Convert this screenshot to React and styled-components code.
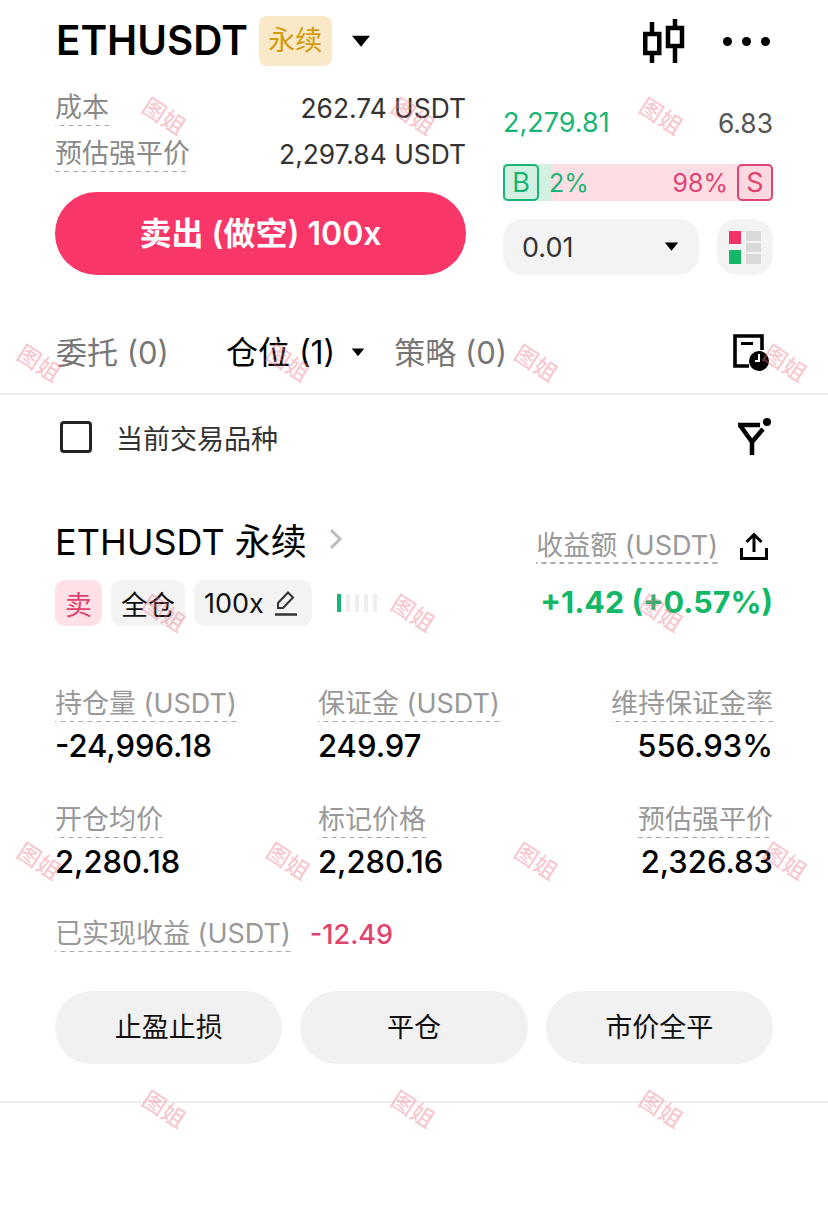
import React from 'react';
import styled, { createGlobalStyle } from 'styled-components';

const GlobalStyle = createGlobalStyle`
    html, body {
        margin: 0;
        background: #fff;
        font-family: Inter, "Noto Sans CJK SC", "Noto Sans", sans-serif;
    }
`;

const WATERMARKS = [
    [165, 115], [414, 115], [662, 115],
    [40, 362], [289, 362], [537, 362], [786, 362],
    [165, 612], [414, 612], [662, 612],
    [40, 860], [289, 860], [537, 860], [786, 860],
    [165, 1108], [414, 1108], [662, 1108],
];

const DETAILS = [
    { label: '持仓量 (USDT)', value: '-24,996.18' },
    { label: '保证金 (USDT)', value: '249.97' },
    { label: '维持保证金率', value: '556.93%', right: true },
    { label: '开仓均价', value: '2,280.18' },
    { label: '标记价格', value: '2,280.16' },
    { label: '预估强平价', value: '2,326.83', right: true },
];

function Caret({ size = 20 }) {
    return (
        <svg width={size} height={size * 0.62} viewBox="0 0 20 12">
            <path d="M1 0.5h18L10 11.5z" fill="#000" />
        </svg>
    );
}

function CandleIcon() {
    return (
        <svg width="42" height="44" viewBox="0 0 42 44" fill="none" stroke="#000" strokeWidth="4.5">
            <path d="M9 3v12M9 34v10M32 0v9M32 27v17" />
            <rect x="2.250" y="15" width="14" height="19" />
            <rect x="25" y="9" width="14" height="18" />
        </svg>
    );
}

function OrdersIcon() {
    return (
        <svg width="37" height="37" viewBox="0 0 37 37">
            <path d="M16 32H2V2h27v14" fill="none" stroke="#000" strokeWidth="3.6" />
            <path d="M8 9.500h12" stroke="#000" strokeWidth="3" />
            <circle cx="26" cy="27" r="10" fill="#000" />
            <path d="M26 20v7h-4" fill="none" stroke="#fff" strokeWidth="2" />
        </svg>
    );
}

function FilterIcon() {
    return (
        <svg width="34" height="38" viewBox="0 0 34 38" fill="none">
            <path d="M0 7h22M2.500 8L14 24V37M14 24L25 11" stroke="#000" strokeWidth="4.500" />
            <circle cx="29" cy="4" r="4" fill="#000" />
        </svg>
    );
}

function ShareIcon() {
    return (
        <svg width="28" height="28" viewBox="0 0 28 28" fill="none" stroke="#000" strokeWidth="3">
            <path d="M14 20V3M6.500 10L14 2.500 21.500 10M1.500 16v10.500h25V16" />
        </svg>
    );
}

function PenIcon() {
    return (
        <svg width="24" height="26" viewBox="0 0 24 26" fill="none" stroke="#333" strokeWidth="2">
            <path d="M4 18V13L14 2.500l5 5L9 18z" />
            <path d="M1 24.500h22" strokeWidth="2.500" />
        </svg>
    );
}

function BookIcon() {
    return (
        <svg width="33" height="33" viewBox="0 0 33 33">
            <rect x="0" y="0" width="12" height="13" fill="#f0346a" />
            <rect x="0" y="19" width="12" height="14" fill="#12b866" />
            <rect x="17" y="0" width="15" height="10" fill="#d9d9d9" />
            <rect x="17" y="12" width="15" height="9" fill="#d9d9d9" />
            <rect x="17" y="23" width="15" height="10" fill="#d9d9d9" />
        </svg>
    );
}

function App() {
    return (
        <Page>
            <GlobalStyle />
            <Header>
                <Symbol>ETHUSDT</Symbol>
                <PerpTag>永续</PerpTag>
                <Caret />
                <HeaderIcons>
                    <CandleIcon />
                    <Dots><i /><i /><i /></Dots>
                </HeaderIcons>
            </Header>

            <Trade>
                <OrderColumn>
                    <CostRow>
                        <DashedLabel>成本</DashedLabel>
                        <CostValue>262.74 USDT</CostValue>
                    </CostRow>
                    <CostRow>
                        <DashedLabel>预估强平价</DashedLabel>
                        <CostValue>2,297.84 USDT</CostValue>
                    </CostRow>
                    <SellButton>卖出 (做空) 100x</SellButton>
                </OrderColumn>

                <BookColumn>
                    <PriceRow>
                        <BuyPrice>2,279.81</BuyPrice>
                        <Amount>6.83</Amount>
                    </PriceRow>
                    <Ratio>
                        <BuyFill />
                        <SellFill />
                        <SideBox $color="#17b573" $bg="#d3f1e2">B</SideBox>
                        <BuyPct>2%</BuyPct>
                        <SellPct>98%</SellPct>
                        <SideBox $color="#e0436f" $bg="#ffd9e1">S</SideBox>
                    </Ratio>
                    <SelectRow>
                        <Select>
                            0.01
                            <Caret size={15} />
                        </Select>
                        <BookButton><BookIcon /></BookButton>
                    </SelectRow>
                </BookColumn>
            </Trade>

            <Tabs>
                <Tab>委托 (0)</Tab>
                <ActiveTab>
                    <span>仓位 (1)</span>
                    <Caret size={14} />
                </ActiveTab>
                <Tab>策略 (0)</Tab>
                <TabIcon><OrdersIcon /></TabIcon>
            </Tabs>

            <FilterRow>
                <Checkbox />
                <FilterText>当前交易品种</FilterText>
                <TabIcon><FilterIcon /></TabIcon>
            </FilterRow>

            <Position>
                <PositionHead>
                    <PositionTitle>
                        ETHUSDT 永续
                        <svg width="14" height="24" viewBox="0 0 14 24" fill="none" stroke="#bdbdbd" strokeWidth="3">
                            <path d="M2 3l9 9-9 9" />
                        </svg>
                    </PositionTitle>
                    <PnlLabel>
                        <DashedLabel $light>收益额 (USDT)</DashedLabel>
                        <ShareIcon />
                    </PnlLabel>
                </PositionHead>

                <TagRow>
                    <SideTag>卖</SideTag>
                    <Tag>全仓</Tag>
                    <LeverageTag>100x <PenIcon /></LeverageTag>
                    <Risk>
                        <RiskBar $on />
                        <RiskBar /><RiskBar /><RiskBar /><RiskBar />
                    </Risk>
                    <Pnl>+1.42 (+0.57%)</Pnl>
                </TagRow>

                <DetailGrid>
                    {DETAILS.map((item) => (
                        <Detail key={item.label} $right={item.right}>
                            <DashedLabel $light>{item.label}</DashedLabel>
                            <DetailValue>{item.value}</DetailValue>
                        </Detail>
                    ))}
                </DetailGrid>

                <RealizedRow>
                    <DashedLabel $light>已实现收益 (USDT)</DashedLabel>
                    <Realized>-12.49</Realized>
                </RealizedRow>

                <Actions>
                    <ActionButton>止盈止损</ActionButton>
                    <ActionButton>平仓</ActionButton>
                    <ActionButton>市价全平</ActionButton>
                </Actions>
            </Position>
            <Divider />

            {WATERMARKS.map(([x, y]) => (
                <Watermark key={`${x}-${y}`} style={{ left: x, top: y }}>图姐</Watermark>
            ))}
        </Page>
    );
}

export default App;

const Page = styled.div`
    position: relative;
    width: 828px;
    height: 1221px;
    overflow: hidden;
    background: #fff;
    color: #000;
`;

const Header = styled.div`
    display: flex;
    align-items: center;
    height: 82px;
    padding: 0 55px 0 56px;
`;

const Symbol = styled.div`
    font-size: 40.4px;
    font-weight: 600;
    line-height: 50px;
`;

const PerpTag = styled.div`
    margin: 0 19px 0 11px;
    width: 73px;
    height: 50px;
    line-height: 50px;
    text-align: center;
    border-radius: 8px;
    background: #f9e9c8;
    color: #d49a0b;
    font-size: 27px;
`;

const HeaderIcons = styled.div`
    margin-left: auto;
    display: flex;
    align-items: center;
    gap: 38px;
`;

const Dots = styled.div`
    display: flex;
    gap: 10px;
    margin-right: 3px;

    i {
        width: 9px;
        height: 9px;
        border-radius: 50%;
        background: #000;
    }
`;

const Trade = styled.div`
    display: flex;
    justify-content: space-between;
    padding: 0 55px;
`;

const OrderColumn = styled.div`
    width: 411px;
    padding-top: 9px;
`;

const CostRow = styled.div`
    display: flex;
    justify-content: space-between;
    align-items: flex-start;
    height: 46px;
`;

const DashedLabel = styled.span`
    display: inline-block;
    font-size: 27px;
    line-height: 34px;
    padding-bottom: 1px;
    color: ${(p) => (p.$light ? '#999' : '#8a8a8a')};
    background-image: linear-gradient(to right, #aaa 60%, transparent 60%);
    background-size: 9px 1.500px;
    background-repeat: repeat-x;
    background-position: bottom;
    white-space: nowrap;
`;

const CostValue = styled.span`
    font-size: 26.4px;
    line-height: 34px;
    color: #333;
`;

const SellButton = styled.div`
    margin-top: 9px;
    height: 83px;
    border-radius: 42px;
    background: #f93668;
    color: #fff;
    font-size: 32px;
    font-weight: 600;
    line-height: 83px;
    text-align: center;
`;

const BookColumn = styled.div`
    width: 270px;
    padding-top: 23px;
`;

const PriceRow = styled.div`
    display: flex;
    justify-content: space-between;
    line-height: 36px;
    font-size: 27px;
`;

const BuyPrice = styled.span`
    color: #17b573;
`;

const Amount = styled.span`
    color: #555;
    font-size: 26.4px;
`;

const Ratio = styled.div`
    position: relative;
    display: flex;
    align-items: center;
    height: 37px;
    margin-top: 23px;
`;

const BuyFill = styled.div`
    position: absolute;
    left: 0;
    top: 0;
    bottom: 0;
    width: 50px;
    background: #d3f1e2;
`;

const SellFill = styled.div`
    position: absolute;
    left: 49px;
    right: 0;
    top: 0;
    bottom: 0;
    border-radius: 3px;
    background: #ffdde4;
`;

const SideBox = styled.div`
    position: relative;
    box-sizing: border-box;
    width: 36px;
    height: 37px;
    line-height: 33px;
    text-align: center;
    font-size: 27px;
    border-radius: 5px;
    border: 2px solid ${(p) => p.$color};
    color: ${(p) => p.$color};
    background: ${(p) => p.$bg};
`;

const BuyPct = styled.span`
    position: relative;
    margin-left: 10px;
    font-size: 25px;
    color: #17b573;
`;

const SellPct = styled.span`
    position: relative;
    margin-left: auto;
    margin-right: 9px;
    font-size: 25px;
    color: #e0436f;
`;

const SelectRow = styled.div`
    display: flex;
    justify-content: space-between;
    margin-top: 18px;
`;

const Select = styled.div`
    box-sizing: border-box;
    display: flex;
    align-items: center;
    justify-content: space-between;
    width: 196px;
    height: 56px;
    padding: 0 20px 0 19px;
    border-radius: 20px;
    background: #f3f3f3;
    font-size: 27px;
    color: #333;
`;

const BookButton = styled.div`
    display: flex;
    align-items: center;
    justify-content: center;
    width: 56px;
    height: 56px;
    border-radius: 20px;
    background: #f3f3f3;
`;

const Tabs = styled.div`
    display: flex;
    align-items: center;
    height: 70px;
    margin-top: 42px;
    padding: 0 58px 6px 56px;
    border-bottom: 2px solid #eeeeee;
`;

const Tab = styled.div`
    padding-bottom: 4px;
    font-size: 31px;
    color: #777;
`;

const ActiveTab = styled.div`
    display: flex;
    align-items: center;
    gap: 16px;
    margin: 0 29px 0 57px;
    font-size: 32px;
    color: #000;

    span {
        padding-bottom: 4px;
    }
`;

const TabIcon = styled.div`
    margin-left: auto;
    display: flex;
`;

const FilterRow = styled.div`
    display: flex;
    align-items: center;
    height: 80px;
    padding: 2px 56px 0 60px;
`;

const Checkbox = styled.div`
    box-sizing: border-box;
    width: 32px;
    height: 32px;
    border: 3px solid #222;
    border-radius: 4px;
`;

const FilterText = styled.div`
    margin-left: 24px;
    font-size: 27px;
    color: #333;
`;

const Position = styled.div`
    padding: 46px 55px 0;
`;

const PositionHead = styled.div`
    display: flex;
    justify-content: space-between;
    align-items: center;
    height: 46px;
`;

const PositionTitle = styled.div`
    display: flex;
    align-items: center;
    gap: 22px;
    padding-bottom: 15px;
    font-size: 36px;
`;

const PnlLabel = styled.div`
    display: flex;
    align-items: center;
    gap: 22px;
    padding-right: 5px;
`;

const TagRow = styled.div`
    display: flex;
    align-items: center;
    gap: 9px;
    margin-top: 11px;
    height: 46px;
`;

const Tag = styled.div`
    display: flex;
    align-items: center;
    gap: 8px;
    height: 46px;
    padding: 0 10px;
    border-radius: 10px;
    background: #f3f3f3;
    font-size: 27px;
    color: #111;
`;

const SideTag = styled(Tag)`
    background: #ffe0e7;
    color: #e0436f;
`;

const LeverageTag = styled(Tag)`
    gap: 10px;
    padding-right: 14px;
`;

const Risk = styled.div`
    display: flex;
    gap: 5px;
    margin-left: 16px;
`;

const RiskBar = styled.div`
    width: 4px;
    height: 18px;
    background: ${(p) => (p.$on ? '#17b573' : '#eeeeee')};
`;

const Pnl = styled.div`
    margin-left: auto;
    padding-bottom: 3px;
    font-size: 30.5px;
    font-weight: 700;
    color: #12b866;
`;

const DetailGrid = styled.div`
    display: grid;
    grid-template-columns: 263px 1fr auto;
    row-gap: 37px;
    margin-top: 61px;
`;

const Detail = styled.div`
    display: flex;
    flex-direction: column;
    align-items: ${(p) => (p.$right ? 'flex-end' : 'flex-start')};
`;

const DetailValue = styled.div`
    margin-top: 4px;
    font-size: 31px;
    line-height: 40px;
    font-weight: 500;
`;

const RealizedRow = styled.div`
    display: flex;
    align-items: center;
    gap: 19px;
    margin-top: 35px;
`;

const Realized = styled.div`
    font-size: 27px;
    color: #e0436f;
    font-weight: 500;
`;

const Actions = styled.div`
    display: grid;
    grid-template-columns: repeat(3, 1fr);
    gap: 18px;
    margin-top: 39px;
`;

const ActionButton = styled.div`
    height: 73px;
    line-height: 73px;
    text-align: center;
    border-radius: 37px;
    background: #f1f1f1;
    font-size: 27px;
    color: #111;
`;

const Divider = styled.div`
    margin-top: 37px;
    height: 2px;
    background: #eeeeee;
`;

const Watermark = styled.div`
    position: absolute;
    transform: translate(-50%, -50%) rotate(33deg);
    font-size: 23px;
    font-weight: 500;
    white-space: nowrap;
    color: rgba(240, 120, 140, 0.42);
    pointer-events: none;
`;
